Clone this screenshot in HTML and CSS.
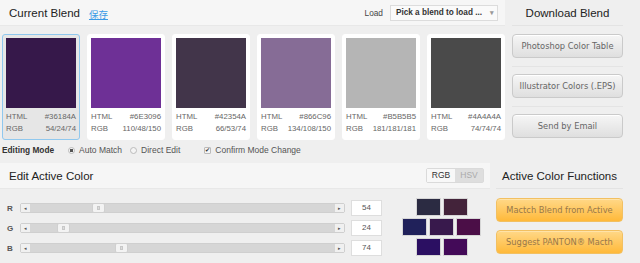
FILE: index.html
```html
<!DOCTYPE html>
<html lang="en">
<head>
    <meta charset="UTF-8">
    <title>Color Blend</title>
    <link rel="stylesheet" href="styles.css">
</head>
<body>
    <div class="row top">
        <section class="main">
            <header class="bar">
                <div class="title">
                    <h2>Current Blend</h2>
                    <a href="#" class="save">保存</a>
                </div>
                <div class="load">
                    <span class="load-label">Load</span>
                    <div class="select">Pick a blend to load ...<span class="caret">&#9662;</span></div>
                </div>
            </header>

            <div class="cards">
                <div class="card active">
                    <div class="swatch" style="background:#36184A"></div>
                    <div class="info"><span>HTML</span><span>#36184A</span></div>
                    <div class="info"><span>RGB</span><span>54/24/74</span></div>
                </div>
                <div class="card">
                    <div class="swatch" style="background:#6E3096"></div>
                    <div class="info"><span>HTML</span><span>#6E3096</span></div>
                    <div class="info"><span>RGB</span><span>110/48/150</span></div>
                </div>
                <div class="card">
                    <div class="swatch" style="background:#42354A"></div>
                    <div class="info"><span>HTML</span><span>#42354A</span></div>
                    <div class="info"><span>RGB</span><span>66/53/74</span></div>
                </div>
                <div class="card">
                    <div class="swatch" style="background:#866C96"></div>
                    <div class="info"><span>HTML</span><span>#866C96</span></div>
                    <div class="info"><span>RGB</span><span>134/108/150</span></div>
                </div>
                <div class="card">
                    <div class="swatch" style="background:#B5B5B5"></div>
                    <div class="info"><span>HTML</span><span>#B5B5B5</span></div>
                    <div class="info"><span>RGB</span><span>181/181/181</span></div>
                </div>
                <div class="card">
                    <div class="swatch" style="background:#4A4A4A"></div>
                    <div class="info"><span>HTML</span><span>#4A4A4A</span></div>
                    <div class="info"><span>RGB</span><span>74/74/74</span></div>
                </div>
            </div>

            <div class="mode">
                <strong>Editing Mode</strong>
                <label class="opt"><span class="radio checked"></span>Auto Match</label>
                <label class="opt"><span class="radio"></span>Direct Edit</label>
                <label class="opt confirm"><span class="check">&#10004;</span>Confirm Mode Change</label>
            </div>
        </section>

        <aside class="side">
            <h3>Download Blend</h3>
            <div class="btn-list">
                <button class="btn">Photoshop Color Table</button>
                <hr>
                <button class="btn">Illustrator Colors (.EPS)</button>
                <hr>
                <button class="btn">Send by Email</button>
            </div>
        </aside>
    </div>

    <div class="row bottom">
        <section class="main">
            <header class="bar">
                <h2>Edit Active Color</h2>
                <div class="toggle"><span class="on">RGB</span><span>HSV</span></div>
            </header>

            <div class="editor">
                <div class="sliders">
                    <div class="slider">
                        <b>R</b>
                        <div class="track">
                            <span class="arrow">&#9666;</span>
                            <div class="rail"><span class="thumb" style="--v:0.212"></span></div>
                            <span class="arrow">&#9656;</span>
                        </div>
                        <div class="value">54</div>
                    </div>
                    <div class="slider">
                        <b>G</b>
                        <div class="track">
                            <span class="arrow">&#9666;</span>
                            <div class="rail"><span class="thumb" style="--v:0.094"></span></div>
                            <span class="arrow">&#9656;</span>
                        </div>
                        <div class="value">24</div>
                    </div>
                    <div class="slider">
                        <b>B</b>
                        <div class="track">
                            <span class="arrow">&#9666;</span>
                            <div class="rail"><span class="thumb" style="--v:0.29"></span></div>
                            <span class="arrow">&#9656;</span>
                        </div>
                        <div class="value">74</div>
                    </div>
                </div>

                <div class="mixer">
                    <div class="mix-row">
                        <span style="background:#2b2b42"></span>
                        <span style="background:#43233a"></span>
                    </div>
                    <div class="mix-row">
                        <span style="background:#20215a"></span>
                        <span style="background:#38194c"></span>
                        <span style="background:#4b0e47"></span>
                    </div>
                    <div class="mix-row">
                        <span style="background:#2b0f62"></span>
                        <span style="background:#430a58"></span>
                    </div>
                </div>
            </div>
        </section>

        <aside class="side">
            <h3>Active Color Functions</h3>
            <div class="btn-list orange">
                <button class="btn warm">Mactch Blend from Active</button>
                <button class="btn warm">Suggest PANTON&reg; Macth</button>
            </div>
        </aside>
    </div>
</body>
</html>
```

FILE: styles.css
```css
body {
    margin: 0;
    background: #efefef;
    font-family: 'Liberation Sans', Arial, 'Noto Sans CJK SC', sans-serif;
    color: #333;
}
.row {
    display: grid;
}
.top {
    grid-template-columns: 505px 111px;
    column-gap: 7px;
}
.bottom {
    grid-template-columns: 490px 127px;
    column-gap: 6px;
    margin-top: 6px;
}

/* section header bars */
.bar {
    display: flex;
    align-items: center;
    justify-content: space-between;
    height: 25px;
    padding: 0 6px 0 9px;
    background: #f6f6f6;
    border-bottom: 1px solid #e8e8e8;
}
.top .bar {
    padding-right: 7px;
}
.bar h2 {
    margin: 0;
    font-size: 11.5px;
    font-weight: normal;
    color: #222;
}
.title {
    display: flex;
    align-items: center;
    gap: 9px;
}
.save {
    color: #3a9ae6;
    font-size: 9.5px;
    margin-top: 2px;
}
.load {
    display: flex;
    align-items: center;
    gap: 7px;
}
.load-label {
    font-size: 8.3px;
    color: #444;
}
.select {
    display: flex;
    align-items: center;
    justify-content: space-between;
    width: 98px;
    height: 14px;
    padding: 0 3px 0 5px;
    background: #fafafa;
    border: 1px solid #dcdcdc;
    font-size: 8.2px;
    font-weight: bold;
    color: #333;
}
.caret {
    font-size: 7px;
    color: #999;
}

/* swatch cards */
.cards {
    display: flex;
    gap: 7px;
    margin-top: 8px;
    padding-left: 2px;
}
.card {
    box-sizing: border-box;
    width: 78px;
    height: 106px;
    padding: 3px;
    background: #fff;
    border: 1px solid #fff;
    border-radius: 3px;
}
.card.active {
    background: #e6e6e6;
    border-color: #90c8ee;
}
.swatch {
    width: 70px;
    height: 70px;
    margin-bottom: 3px;
}
.info {
    display: flex;
    justify-content: space-between;
    height: 12px;
    line-height: 12px;
    font-size: 7.8px;
    color: #666;
}

/* editing mode */
.mode {
    display: flex;
    align-items: center;
    height: 14px;
    margin-top: 3px;
    padding-left: 2px;
    font-size: 8.5px;
    color: #555;
}
.mode strong {
    font-size: 8.3px;
    color: #333;
    margin-right: 14px;
}
.opt {
    display: flex;
    align-items: center;
    gap: 4px;
    margin-right: 8px;
}
.confirm {
    margin-left: 16px;
}
.radio {
    box-sizing: border-box;
    width: 7px;
    height: 7px;
    border: 1px solid #bbb;
    border-radius: 50%;
    background: #f4f4f4;
}
.radio.checked {
    background: radial-gradient(circle, #555 0 1.5px, #f4f4f4 2px);
}
.check {
    box-sizing: border-box;
    width: 7px;
    height: 7px;
    border: 1px solid #bbb;
    border-radius: 1px;
    background: #f4f4f4;
    font-size: 6px;
    line-height: 5px;
    text-align: center;
    color: #333;
}

/* sidebars */
.side h3 {
    box-sizing: border-box;
    height: 26px;
    margin: 0;
    line-height: 26px;
    text-align: center;
    font-size: 11.5px;
    font-weight: normal;
    color: #222;
    border-bottom: 1px solid #e3e3e3;
}
.btn-list {
    display: flex;
    flex-direction: column;
    margin-top: 8px;
}
.btn-list.orange {
    margin-top: 9px;
    gap: 8px;
}
.btn-list hr {
    width: 100%;
    margin: 8px 0 7px;
    border: none;
    border-top: 1px solid #e4e4e4;
}
.btn {
    height: 24px;
    padding: 0;
    font-family: 'DejaVu Sans', Verdana, sans-serif;
    font-size: 8.3px;
    color: #666;
    background: linear-gradient(#f6f6f6, #dfdfdf);
    border: 1px solid #cacaca;
    border-radius: 4px;
    box-shadow: inset 0 1px 0 #fff;
    cursor: pointer;
}
.btn.warm {
    color: #97784a;
    background: linear-gradient(#ffd888, #ffb93a);
    border-color: #f2c061;
    box-shadow: inset 0 1px 0 #ffe3a8;
}

/* rgb/hsv toggle */
.toggle {
    display: flex;
    height: 15px;
    border: 1px solid #dadada;
    border-radius: 2px;
    font-size: 8.5px;
    line-height: 13px;
    box-sizing: border-box;
}
.toggle span {
    width: 28px;
    text-align: center;
    background: #dedede;
    color: #aaa;
}
.toggle span.on {
    background: #f8f8f8;
    color: #333;
}

/* sliders */
.editor {
    display: flex;
    margin-top: 11px;
}
.sliders {
    display: flex;
    flex-direction: column;
    gap: 4px;
    padding-left: 7px;
}
.slider {
    display: flex;
    align-items: center;
    height: 16px;
}
.slider b {
    width: 13px;
    font-size: 8px;
    color: #555;
}
.track {
    display: flex;
    width: 325px;
    height: 10px;
    box-sizing: border-box;
    border: 1px solid #cfcfcf;
    border-radius: 2px;
    background: #d6d6d6;
}
.arrow {
    width: 9px;
    background: #f0f0f0;
    font-size: 5px;
    line-height: 8px;
    text-align: center;
    color: #555;
}
.rail {
    position: relative;
    flex: 1;
}
.thumb {
    position: absolute;
    top: -1px;
    left: calc(var(--v) * (100% - 13px));
    box-sizing: border-box;
    width: 13px;
    height: 10px;
    background: #f3f3f3;
    border: 1px solid #d0d0d0;
    border-radius: 2px;
}
.thumb::after {
    content: "";
    display: block;
    width: 3px;
    height: 4px;
    margin: 2px auto 0;
    background: #dcdcdc;
    border: 1px solid #c8c8c8;
    box-sizing: border-box;
}
.value {
    box-sizing: border-box;
    width: 31px;
    height: 16px;
    margin-left: 6px;
    background: #fff;
    border: 1px solid #dedede;
    font-size: 8px;
    line-height: 14px;
    text-align: center;
    color: #555;
}

/* color mixer */
.mixer {
    display: flex;
    flex-direction: column;
    align-items: center;
    gap: 2px;
    width: 79px;
    margin: -2px 0 0 20px;
}
.mix-row {
    display: flex;
    gap: 2px;
}
.mix-row span {
    box-sizing: border-box;
    width: 25px;
    height: 18px;
    border: 1px solid #d6d6d6;
}
```
